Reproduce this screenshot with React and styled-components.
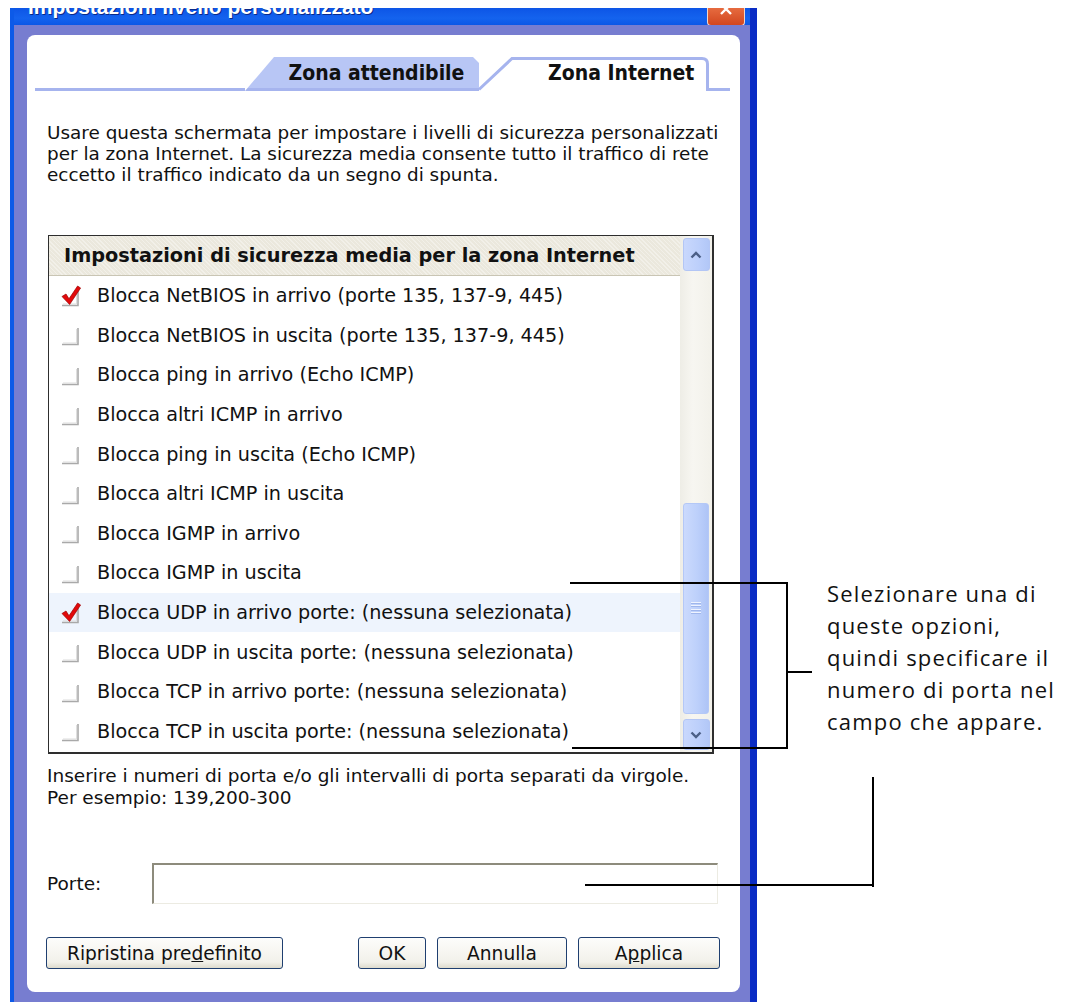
import React from "react";
import styled, { createGlobalStyle } from "styled-components";

const GlobalStyle = createGlobalStyle`
  html, body {
    margin: 0;
    padding: 0;
    background: #fff;
  }
  body {
    font-family: "DejaVu Sans", "Liberation Sans", sans-serif;
  }
`;

const Page = styled.div`
  position: relative;
  width: 1066px;
  height: 1002px;
  overflow: hidden;
  background: #fff;
  display: flex;
  align-items: flex-start;
  padding-top: 8px;
  box-sizing: border-box;
`;

const Window = styled.div`
  margin-left: 10px;
  width: 747px;
  height: 994px;
  flex-shrink: 0;
  display: flex;
  flex-direction: column;
  box-sizing: border-box;
  border-left: 4px solid #0c5ae8;
  border-right: 7px solid #0a2cc4;
  background: #777dd0;
`;

const TitleBar = styled.div`
  height: 17px;
  flex-shrink: 0;
  overflow: hidden;
  display: flex;
  align-items: flex-start;
  justify-content: space-between;
  background: linear-gradient(#0d55e6, #1463ee 60%, #0b57e6);
`;

const TitleText = styled.span`
  margin: -13px 0 0 14px;
  line-height: 24px;
  font-family: "Liberation Sans", sans-serif;
  font-weight: bold;
  font-size: 21px;
  color: #fff;
  white-space: nowrap;
  text-shadow: 1px 1px 0 #0a2a8a;
`;

const CloseButton = styled.div`
  margin-right: 5px;
  width: 38px;
  height: 18px;
  box-sizing: border-box;
  border: 1px solid #f3d6c8;
  border-top: none;
  border-radius: 0 0 4px 4px;
  background: linear-gradient(#e66b3f, #d2461f);
  display: flex;
  justify-content: center;
  overflow: hidden;
`;

const Frame = styled.div`
  flex: 1;
  display: flex;
  padding: 10px 10px 10px 13px;
  min-height: 0;
`;

const Panel = styled.div`
  flex: 1;
  background: #fff;
  border-radius: 8px;
  display: flex;
  flex-direction: column;
`;

const TabStrip = styled.div`
  margin-top: 22px;
  height: 34px;
  padding: 0 10px 0 8px;
  display: flex;
  align-items: flex-end;
`;

const Rule = styled.div`
  flex: 1;
  height: 3px;
  background: #a6b4ee;
`;

const tabFont = `
  font-family: "Liberation Sans Narrow", "DejaVu Sans Condensed", "Liberation Sans", sans-serif;
  font-weight: bold;
  font-size: 21px;
  color: #111;
`;

const BackTab = styled.div`
  width: 234px;
  height: 34px;
  box-sizing: border-box;
  padding: 0 0 3px 29px;
  display: flex;
  align-items: center;
  justify-content: center;
  background: linear-gradient(to top, #a6b4ee 3px, #b8c6f5 3px);
  clip-path: polygon(0 100%, 29px 0, calc(100% - 6px) 0, 100% 6px, 100% 100%);
  ${tabFont}
`;

const FrontTab = styled.div`
  position: relative;
  width: 251px;
  height: 34px;
  box-sizing: border-box;
  padding: 0 0 3px 69px;
  display: flex;
  align-items: center;
  ${tabFont}

  svg {
    position: absolute;
    inset: 0;
  }
  span {
    position: relative;
  }
`;

const Description = styled.p`
  margin: 31px 20px 0 20px;
  font-size: 18.4px;
  line-height: 21px;
  color: #111;
  white-space: nowrap;
`;

const ListBox = styled.div`
  margin: 50px 26px 0 21px;
  height: 519px;
  box-sizing: border-box;
  border: 1px solid #2e2e2e;
  border-right-width: 2px;
  border-bottom-width: 2px;
  display: grid;
  grid-template-columns: 1fr 32px;
`;

const ListColumn = styled.div`
  display: flex;
  flex-direction: column;
  min-width: 0;
`;

const ListHeader = styled.div`
  height: 40px;
  flex-shrink: 0;
  box-sizing: border-box;
  padding-left: 15px;
  display: flex;
  align-items: center;
  border-bottom: 1px solid #c9c5b4;
  background:
    repeating-linear-gradient(45deg, rgba(255, 255, 255, 0.35) 0 1px, transparent 1px 3px),
    #ebe8dd;
  font-weight: bold;
  font-size: 19.3px;
  color: #111;
  white-space: nowrap;
`;

const Row = styled.div`
  height: 39.6px;
  flex-shrink: 0;
  display: flex;
  align-items: center;
  padding-left: 12px;
  background: ${(p) => (p.$active ? "#eef4fd" : "transparent")};
  font-size: 19.2px;
  color: #111;
  white-space: nowrap;

  svg {
    flex-shrink: 0;
    margin-right: 16px;
  }
`;

const ScrollBar = styled.div`
  display: flex;
  flex-direction: column;
  align-items: center;
  padding: 2px 0;
  background: linear-gradient(90deg, #eeede6, #f7f6f1 40%, #f2f1ea);
`;

const ArrowButton = styled.div`
  width: 27px;
  height: ${(p) => p.$h}px;
  flex-shrink: 0;
  box-sizing: border-box;
  border: 1px solid #b3c6f5;
  border-radius: 3px;
  background: linear-gradient(90deg, #c9d8fd, #bccffb 60%, #b2c7f7);
  display: flex;
  align-items: center;
  justify-content: center;
  margin-top: ${(p) => p.$gap || 0}px;
`;

const Spacer = styled.div`
  flex: 1;
`;

const Thumb = styled.div`
  width: 26px;
  height: 211px;
  flex-shrink: 0;
  box-sizing: border-box;
  border: 1px solid #b4c8f7;
  border-radius: 3px;
  background: linear-gradient(90deg, #cbdafd, #bdd0fb 55%, #aec4f6);
  display: flex;
  align-items: center;
  justify-content: center;
`;

const Grip = styled.div`
  width: 10px;
  height: 14px;
  background: repeating-linear-gradient(#eef3ff 0 1px, #9fb6ec 1px 2px, transparent 2px 3.5px);
`;

const Hint = styled.p`
  margin: 11px 20px 0 20px;
  font-size: 18.5px;
  line-height: 22px;
  color: #111;
  white-space: nowrap;
`;

const PortRow = styled.div`
  margin: 54px 22px 0 20px;
  display: flex;
  align-items: center;
  font-size: 18.5px;
  color: #111;
`;

const PortLabel = styled.label`
  width: 105px;
  flex-shrink: 0;
`;

const PortInput = styled.div`
  flex: 1;
  height: 41px;
  box-sizing: border-box;
  border-style: solid;
  border-width: 2px 1px 1px 2px;
  border-color: #8d8b7c #ecebe2 #ecebe2 #8d8b7c;
  background: #fff;
`;

const ButtonRow = styled.div`
  margin: 33px 20px 0 19px;
  display: flex;
  justify-content: space-between;
`;

const ButtonGroup = styled.div`
  display: flex;
  gap: 11px;
`;

const Button = styled.div`
  width: ${(p) => p.$w}px;
  height: 32px;
  box-sizing: border-box;
  border: 1px solid #1f3f70;
  border-radius: 3px;
  background: linear-gradient(#fdfdfb, #f2f1ea 80%, #dedbcd);
  display: flex;
  align-items: center;
  justify-content: center;
  font-size: 18.6px;
  color: #111;
  white-space: nowrap;
`;

const Note = styled.div`
  margin: 569px 0 0 70px;
  font-family: "Open Sans", "DejaVu Sans", sans-serif;
  font-size: 22px;
  line-height: 32px;
  letter-spacing: 1.2px;
  color: #111;
  white-space: nowrap;
`;

/* callout strokes drawn over the dialog */
const Stroke = styled.div`
  position: absolute;
  left: ${(p) => p.$x}px;
  top: ${(p) => p.$y}px;
  width: ${(p) => p.$w}px;
  height: ${(p) => p.$h}px;
  background: #000;
`;

const rules = [
  "Blocca NetBIOS in arrivo (porte 135, 137-9, 445)",
  "Blocca NetBIOS in uscita (porte 135, 137-9, 445)",
  "Blocca ping in arrivo (Echo ICMP)",
  "Blocca altri ICMP in arrivo",
  "Blocca ping in uscita (Echo ICMP)",
  "Blocca altri ICMP in uscita",
  "Blocca IGMP in arrivo",
  "Blocca IGMP in uscita",
  "Blocca UDP in arrivo porte: (nessuna selezionata)",
  "Blocca UDP in uscita porte: (nessuna selezionata)",
  "Blocca TCP in arrivo porte: (nessuna selezionata)",
  "Blocca TCP in uscita porte: (nessuna selezionata)",
];
const checked = [0, 8];

function CheckMark({ on }) {
  return (
    <svg width="20" height="22" viewBox="0 0 20 22">
      <path d="M1 20.5 H17 V4" fill="none" stroke="#a9a9a9" strokeWidth="1.6" />
      <path d="M2 19 H15.6 V5" fill="none" stroke="#dcdcdc" strokeWidth="1" />
      {on && (
        <path
          d="M1 11.5 L5 9 L8 13.8 L16.6 1 L19.6 3 L8.6 19.5 Z"
          fill="#e2090b"
          stroke="#9c0000"
          strokeWidth="0.7"
          strokeLinejoin="round"
        />
      )}
    </svg>
  );
}

function Chevron({ down }) {
  return (
    <svg width="12" height="8" viewBox="0 0 12 8">
      <path
        d={down ? "M1.5 1.5 L6 6 L10.5 1.5" : "M1.5 6.5 L6 2 L10.5 6.5"}
        fill="none"
        stroke="#4b5f86"
        strokeWidth="2.4"
      />
    </svg>
  );
}

export default function App() {
  return (
    <Page>
      <GlobalStyle />
      <Window>
        <TitleBar>
          <TitleText>Impostazioni livello personalizzato</TitleText>
          <CloseButton>
            <svg width="14" height="14" viewBox="0 0 14 14" style={{ marginTop: -6 }}>
              <path d="M2 2 L12 12 M12 2 L2 12" stroke="#fff" strokeWidth="2.4" />
            </svg>
          </CloseButton>
        </TitleBar>
        <Frame>
          <Panel>
            <TabStrip>
              <Rule />
              <BackTab>Zona attendibile</BackTab>
              <FrontTab>
                <svg width="251" height="34" viewBox="0 0 251 34">
                  <path
                    d="M0 32.5 L33 1.5 H223 Q228.5 1.5 228.5 7 V32.5 H251"
                    fill="none"
                    stroke="#a6b4ee"
                    strokeWidth="3"
                  />
                </svg>
                <span>Zona Internet</span>
              </FrontTab>
            </TabStrip>

            <Description>
              Usare questa schermata per impostare i livelli di sicurezza personalizzati
              <br />
              per la zona Internet. La sicurezza media consente tutto il traffico di rete
              <br />
              eccetto il traffico indicato da un segno di spunta.
            </Description>

            <ListBox>
              <ListColumn>
                <ListHeader>Impostazioni di sicurezza media per la zona Internet</ListHeader>
                {rules.map((r, i) => (
                  <Row key={r} $active={i === 8}>
                    <CheckMark on={checked.includes(i)} />
                    {r}
                  </Row>
                ))}
              </ListColumn>
              <ScrollBar>
                <ArrowButton $h={33}>
                  <Chevron />
                </ArrowButton>
                <Spacer />
                <Thumb>
                  <Grip />
                </Thumb>
                <ArrowButton $h={31} $gap={5}>
                  <Chevron down />
                </ArrowButton>
              </ScrollBar>
            </ListBox>

            <Hint>
              Inserire i numeri di porta e/o gli intervalli di porta separati da virgole.
              <br />
              Per esempio: 139,200-300
            </Hint>

            <PortRow>
              <PortLabel>Porte:</PortLabel>
              <PortInput />
            </PortRow>

            <ButtonRow>
              <Button $w={237}>
                Ripristina pre<u>d</u>efinito
              </Button>
              <ButtonGroup>
                <Button $w={68}>OK</Button>
                <Button $w={130}>Annulla</Button>
                <Button $w={142}>
                  A<u>p</u>plica
                </Button>
              </ButtonGroup>
            </ButtonRow>
          </Panel>
        </Frame>
      </Window>

      <Note>
        Selezionare una di
        <br />
        queste opzioni,
        <br />
        quindi specificare il
        <br />
        numero di porta nel
        <br />
        campo che appare.
      </Note>

      <Stroke $x={570} $y={582} $w={218} $h={2} />
      <Stroke $x={572} $y={747} $w={216} $h={2} />
      <Stroke $x={786} $y={582} $w={2} $h={167} />
      <Stroke $x={787} $y={671} $w={25} $h={2} />
      <Stroke $x={872} $y={777} $w={2} $h={110} />
      <Stroke $x={585} $y={884} $w={289} $h={2} />
    </Page>
  );
}
